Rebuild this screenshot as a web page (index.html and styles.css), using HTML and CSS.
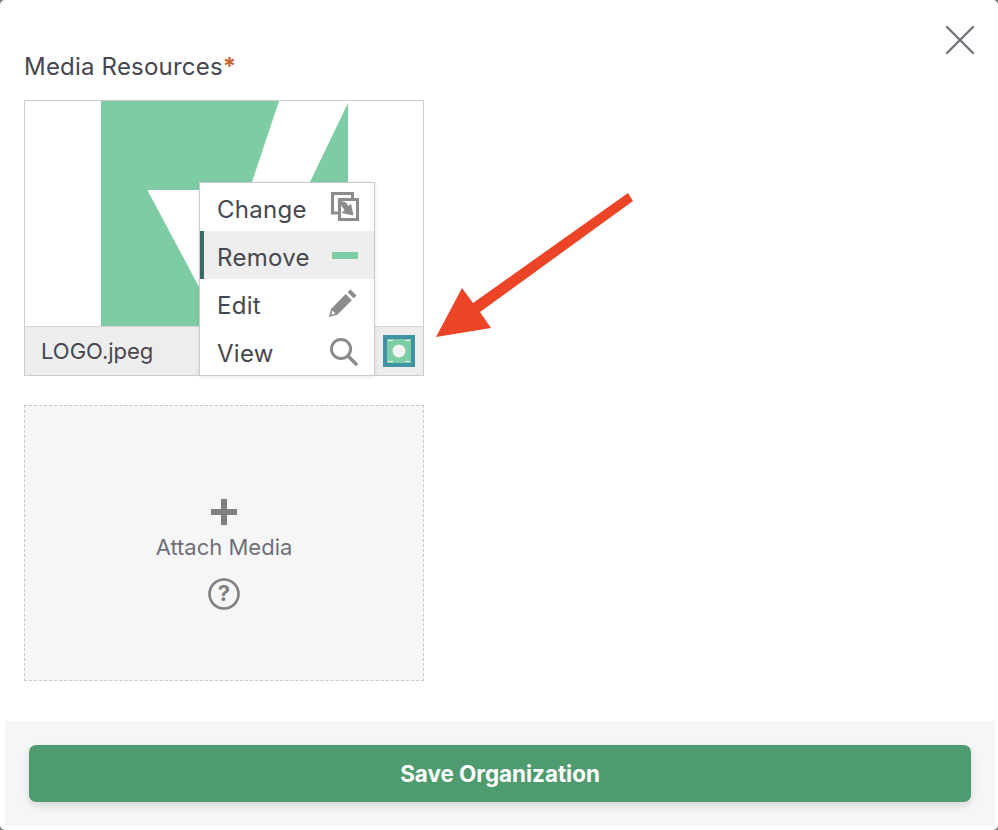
FILE: index.html
```html
<!DOCTYPE html>
<html lang="en">
<head>
  <meta charset="UTF-8">
  <title>Media Resources</title>
  <link rel="stylesheet" href="styles.css">
</head>
<body>
  <div class="modal">
    <button class="close-btn" aria-label="Close">
      <svg width="30" height="30" viewBox="0 0 30 30"><path d="M2 2 L28 28 M28 2 L2 28" stroke="#73737b" stroke-width="2.4" stroke-linecap="round" fill="none"/></svg>
    </button>

    <div class="content">
      <div class="section-label">Media Resources<span class="required">*</span></div>

      <div class="media-card">
        <div class="media-preview">
          <svg class="logo-img" width="247" height="225" viewBox="0 0 247 225">
            <rect width="247" height="225" fill="#7dcca3"/>
            <path d="M178 0 L247 0 L247 2 L209 81 L209 110 L140 110 L151 81 Z" fill="#fff"/>
            <path d="M48 90 L130 90 L130 225 L120 225 Z" fill="#fff" stroke="#fff" stroke-width="2" stroke-linejoin="round"/>
          </svg>
        </div>
        <div class="media-footer">
          <span class="file-name">LOGO.jpeg</span>
          <svg class="thumb" width="32" height="32" viewBox="0 0 32 32">
            <rect width="32" height="32" fill="#3f93a3"/>
            <rect x="4" y="4" width="24" height="24" fill="#7dcca3"/>
            <path d="M5 5.5 H10 M22 5.5 H27 M5 26.5 H10 M22 26.5 H27" stroke="#eef5f0" stroke-width="1"/>
            <circle cx="16" cy="16" r="6.5" fill="#eef5f0"/>
          </svg>
        </div>

        <ul class="menu">
          <li class="menu-item">
            <span class="menu-label">Change</span>
            <svg width="30" height="30" viewBox="0 0 30 30" fill="none" stroke="#8c8c8c" stroke-width="3">
              <path d="M9 21 H2.5 V1.5 H22.5 V7"/>
              <path d="M9.5 7.5 H27.5 V27.5 H9.5 Z"/>
              <path d="M8 8 L16 10.5 L18.5 14 L21 11.5 L23.5 23.5 L11.5 21 L14.5 18 L11.5 14 Z" fill="#8c8c8c" stroke="none"/>
            </svg>
          </li>
          <li class="menu-item active">
            <span class="menu-label">Remove</span>
            <span class="minus-icon"></span>
          </li>
          <li class="menu-item">
            <span class="menu-label">Edit</span>
            <svg class="edit-icon" width="30" height="30" viewBox="0 0 32 32" fill="#8c8c8c">
              <path d="M2 31 L4.5 22 L20 6.5 L26.5 13 L11 28.5 Z M5.8 24 L4.6 28.4 L9 27.2 Z" fill-rule="evenodd"/>
              <path d="M22 4.5 L25 1.5 L31.5 8 L28.5 11 Z"/>
            </svg>
          </li>
          <li class="menu-item">
            <span class="menu-label">View</span>
            <svg width="30" height="30" viewBox="0 0 30 30" fill="none" stroke="#8c8c8c">
              <circle cx="11" cy="13" r="9.6" stroke-width="3"/>
              <path d="M18 20 L26 28" stroke-width="3.6" stroke-linecap="round"/>
            </svg>
          </li>
        </ul>
      </div>

      <div class="attach-box">
        <svg width="26" height="26" viewBox="0 0 26 26"><path d="M10 0 H16 V10 H26 V16 H16 V26 H10 V16 H0 V10 H10 Z" fill="#808080"/></svg>
        <span class="attach-text">Attach Media</span>
        <svg class="help-icon" width="32" height="32" viewBox="0 0 32 32">
          <circle cx="16" cy="16" r="14.5" fill="none" stroke="#808080" stroke-width="2.6"/>
          <text x="16" y="23" text-anchor="middle" class="help-mark">?</text>
        </svg>
      </div>
    </div>

    <div class="modal-footer">
      <button class="save-btn">Save Organization</button>
    </div>
  </div>

  <svg class="arrow" width="210" height="160" viewBox="0 0 210 160">
    <path d="M192 5 L197 13 L44 124 L55 140 L0 149 L26 100 L37 115 Z" fill="#ec4427"/>
  </svg>
</body>
</html>
```

FILE: styles.css
```css
* {
  box-sizing: border-box;
}

body {
  margin: 0;
  background: #777;
  font-family: Inter, 'Liberation Sans', sans-serif;
  color: #47474f;
  position: relative;
  height: 830px;
  overflow: hidden;
}

.modal {
  height: 830px;
  display: flex;
  flex-direction: column;
  background: #fff;
  border-radius: 5px;
}

.close-btn {
  position: absolute;
  top: 25px;
  right: 23px;
  width: 30px;
  height: 30px;
  padding: 0;
  border: none;
  background: none;
}

.content {
  flex: 1;
  padding: 52px 24px 0;
}

.section-label {
  font-size: 24px;
  line-height: 29px;
  height: 48px;
  letter-spacing: 0.2px;
}

.required {
  color: #c8642f;
  font-weight: 700;
}

.media-card {
  position: relative;
  width: 400px;
  height: 276px;
  border: 1px solid #cbcbcb;
  display: flex;
  flex-direction: column;
}

.media-preview {
  height: 225px;
  padding-left: 76px;
  overflow: hidden;
  background: #fff;
}

.logo-img {
  display: block;
  filter: blur(0.5px);
}

.media-footer {
  flex: 1;
  display: flex;
  align-items: center;
  justify-content: space-between;
  padding: 0 8px 0 16px;
  background: #ededed;
  border-top: 1px solid #d4d4d4;
  font-size: 22px;
}

.menu {
  position: absolute;
  top: 81px;
  left: 174px;
  width: 176px;
  margin: 0;
  padding: 0;
  list-style: none;
  background: #fff;
  border: 1px solid #cbcbcb;
  box-shadow: 0 1px 4px rgba(0, 0, 0, 0.1);
}

.menu-item {
  height: 48px;
  display: flex;
  align-items: center;
  justify-content: space-between;
  padding: 0 14px 0 17px;
  font-size: 24px;
}

.menu-label {
  margin-top: 4px;
  letter-spacing: 0.3px;
}

.menu-item.active {
  background: #eeeeee;
  border-left: 4px solid #3b6b69;
  padding-left: 13px;
}

.edit-icon {
  margin-right: 3px;
}

.minus-icon {
  width: 26px;
  height: 7px;
  margin-right: 2px;
  background: #7dcca3;
}

.attach-box {
  width: 400px;
  height: 276px;
  margin-top: 29px;
  border: 1px dashed #cbcbcb;
  background: #f6f6f6;
  display: flex;
  flex-direction: column;
  align-items: center;
  padding-top: 93px;
}

.attach-text {
  margin-top: 10px;
  font-size: 22px;
  line-height: 24px;
  color: #6f6f78;
}

.help-icon {
  margin-top: 19px;
}

.help-mark {
  font-family: Inter, sans-serif;
  font-size: 22px;
  font-weight: 700;
  fill: #808080;
}

.modal-footer {
  margin: 0 3px 4px 5px;
  height: 105px;
  padding: 24px 24px 0;
  background: #f6f6f6;
}

.save-btn {
  display: block;
  width: 100%;
  height: 57px;
  border: none;
  border-radius: 7px;
  background: #4f9b70;
  color: #fff;
  font-family: Inter, sans-serif;
  font-size: 22.4px;
  font-weight: 700;
  box-shadow: 0 4px 8px rgba(0, 0, 0, 0.12);
}

.arrow {
  position: absolute;
  top: 188px;
  left: 436px;
}
```
